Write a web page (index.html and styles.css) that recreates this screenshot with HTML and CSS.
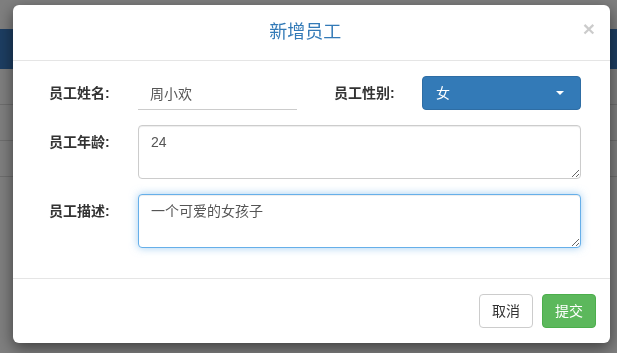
FILE: index.html
```html
<!DOCTYPE html>
<html lang="zh-CN">

<head>
  <meta charset="UTF-8">
  <title>员工管理</title>
  <link rel="stylesheet" href="styles.css">
</head>

<body>
  <!-- 背景页面 -->
  <div class="page">
    <div class="navbar"></div>
    <div class="table-gap"></div>
    <div class="table-row"></div>
    <div class="table-row"></div>
    <div class="table-row"></div>
  </div>

  <div class="backdrop"></div>

  <div class="modal">
    <div class="modal-header">
      <h4 class="modal-title">新增员工</h4>
      <span class="close">&times;</span>
    </div>

    <form class="modal-body">
      <div class="form-row">
        <label class="control-label">员工姓名:</label>
        <input class="line-input" type="text" value="周小欢">
        <label class="control-label label-gap">员工性别:</label>
        <button type="button" class="dropdown-btn">
          <span>女</span>
          <span class="caret"></span>
        </button>
      </div>

      <div class="form-row">
        <label class="control-label">员工年龄:</label>
        <textarea class="form-control wide" rows="2">24</textarea>
      </div>

      <div class="form-row">
        <label class="control-label">员工描述:</label>
        <textarea class="form-control wide is-focus" rows="2">一个可爱的女孩子</textarea>
      </div>
    </form>

    <div class="modal-footer">
      <button type="button" class="btn btn-default">取消</button>
      <button type="button" class="btn btn-success">提交</button>
    </div>
  </div>
</body>

</html>
```

FILE: styles.css
```css
* {
  box-sizing: border-box;
}

body {
  margin: 0;
  font-family: "Liberation Sans", "Noto Sans CJK SC", sans-serif;
  font-size: 14px;
  line-height: 20px;
  color: #333;
  background: #fff;
  overflow: hidden;
}

/* 背景页面 */
.page {
  height: 353px;
  padding-top: 29px;
}

.navbar {
  height: 40px;
  background: #3a7dc4;
}

.table-gap {
  height: 35px;
}

.table-row {
  height: 36px;
  border-top: 1px solid #dcdcdc;
}

.backdrop {
  position: fixed;
  inset: 0;
  background: rgba(0, 0, 0, 0.5);
}

/* 弹窗 */
.modal {
  position: absolute;
  top: 5px;
  left: 13px;
  width: 597px;
  background: #fff;
  border-radius: 6px;
  box-shadow: 0 5px 15px rgba(0, 0, 0, 0.5);
}

.modal-header {
  display: flex;
  align-items: flex-start;
  padding: 15px;
  border-bottom: 1px solid #e5e5e5;
}

.modal-title {
  flex: 1;
  margin: 0;
  font-size: 18px;
  line-height: 25px;
  font-weight: normal;
  text-align: center;
  color: #337ab7;
}

.close {
  margin-top: -2px;
  font-size: 21px;
  line-height: 21px;
  font-weight: bold;
  color: #000;
  opacity: 0.2;
}

.modal-body {
  margin: 0;
  padding: 15px 29px 15px 36px;
}

.form-row {
  display: grid;
  grid-template-columns: 89px 159px 125px 159px;
  align-items: start;
  margin-bottom: 15px;
}

.control-label {
  padding-top: 7px;
  font-weight: bold;
  line-height: 20px;
}

.label-gap {
  padding-left: 37px;
}

.line-input {
  height: 34px;
  padding: 6px 12px;
  border: none;
  border-bottom: 1px solid #ccc;
  font: inherit;
  color: #555;
  outline: none;
}

.dropdown-btn {
  display: flex;
  align-items: center;
  justify-content: space-between;
  height: 34px;
  padding: 6px 13px;
  border: 1px solid #2e6da4;
  border-radius: 4px;
  background: #337ab7;
  color: #fff;
  font: inherit;
}

.caret {
  width: 0;
  height: 0;
  margin-right: 3px;
  border-top: 4px solid #fff;
  border-left: 4px solid transparent;
  border-right: 4px solid transparent;
}

.form-control {
  display: block;
  padding: 6px 12px;
  border: 1px solid #ccc;
  border-radius: 4px;
  font: inherit;
  line-height: 20px;
  color: #555;
  box-shadow: inset 0 1px 1px rgba(0, 0, 0, 0.075);
  outline: none;
}

.wide {
  grid-column: 2 / 5;
  height: 54px;
}

.is-focus {
  border-color: #66afe9;
  box-shadow: inset 0 1px 1px rgba(0, 0, 0, 0.075), 0 0 8px rgba(102, 175, 233, 0.6);
}

.modal-footer {
  display: flex;
  justify-content: flex-end;
  gap: 9px;
  padding: 15px 14px 15px 15px;
  border-top: 1px solid #e5e5e5;
}

.btn {
  height: 34px;
  padding: 6px 12px;
  border: 1px solid transparent;
  border-radius: 4px;
  font: inherit;
  line-height: 20px;
}

.btn-default {
  background: #fff;
  border-color: #ccc;
  color: #333;
}

.btn-success {
  background: #5cb85c;
  border-color: #4cae4c;
  color: #fff;
}
```
